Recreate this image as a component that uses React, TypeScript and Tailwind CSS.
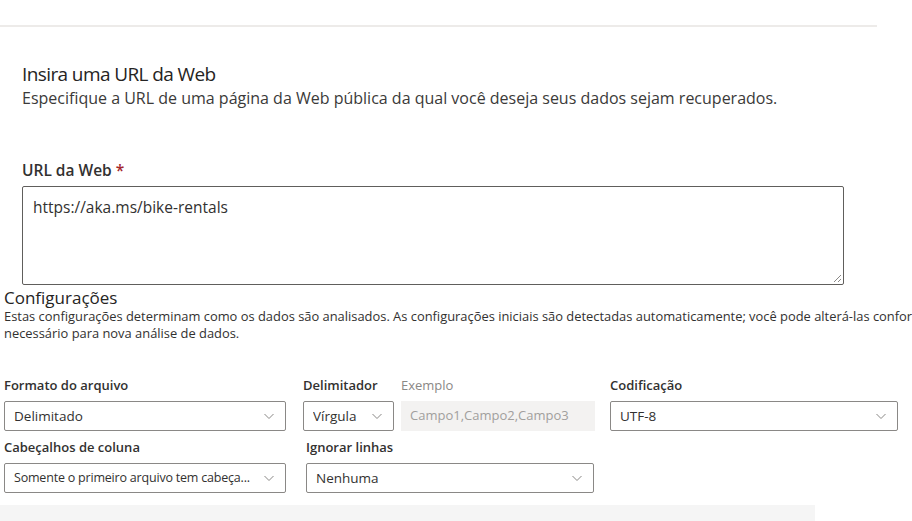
import React from "react";

const font = { fontFamily: '"Open Sans", "Noto Sans", sans-serif' };

const Chevron = () => (
  <svg width="12" height="12" viewBox="0 0 12 12" fill="none" className="shrink-0">
    <path d="M1.5 4 L6 8.5 L10.5 4" stroke="#8a8886" strokeWidth="1" />
  </svg>
);

type DropdownProps = {
  value: string;
  className?: string;
  textClass?: string;
};

const Dropdown = ({ value, className, textClass }: DropdownProps) => (
  <div
    className={`h-[30px] flex items-center justify-between border border-[#8a8886] rounded-[2px] bg-white pl-[9px] pr-[10px] text-[13.5px] text-[#323130] ${className ?? ""}`}
  >
    <span className={`whitespace-nowrap overflow-hidden ${textClass ?? ""}`}>{value}</span>
    <Chevron />
  </div>
);

const Label = ({ children, className }: { children: React.ReactNode; className?: string }) => (
  <div className={`text-[13px] font-semibold text-[#323130] h-[20px] leading-[20px] ${className ?? ""}`}>
    {children}
  </div>
);

export default function App() {
  return (
    <div className="w-[912px] h-[521px] bg-white overflow-hidden" style={font}>
      <div className="pt-[25px]">
        <div className="w-[877px] h-[2px] bg-[#edebe9]" />
      </div>

      {/* web url section */}
      <div className="pl-[22px] pt-[34px]">
        <h1 className="text-[19px] leading-[26px] tracking-[-0.6px] text-[#252423]">Insira uma URL da Web</h1>
        <p className="text-[16px] leading-[22px] text-[#3b3a39] whitespace-nowrap">
          Especifique a URL de uma página da Web pública da qual você deseja seus dados sejam recuperados.
        </p>

        <div className="pt-[51px]">
          <div className="text-[15.5px] font-semibold text-[#323130] leading-[20px]">
            URL da Web <span className="text-[#a4262c]">*</span>
          </div>
          <div className="mt-[6px] w-[822px] h-[99px] border border-[#605e5c] rounded-[2px] relative">
            <div className="px-[10px] pt-[10px] text-[15.5px] text-[#323130] leading-[20px]">
              https://aka.ms/bike-rentals
            </div>
            <svg width="9" height="9" viewBox="0 0 9 9" className="absolute right-[1px] bottom-[1px]">
              <path d="M8 1 L1 8 M8 5 L5 8" stroke="#8a8886" strokeWidth="1" />
            </svg>
          </div>
        </div>
      </div>

      {/* settings section */}
      <div className="pl-[4px] pt-[2px]">
        <h2 className="text-[17px] leading-[21px] text-[#252423]">Configurações</h2>
        <p className="text-[12.9px] leading-[17px] text-[#323130] whitespace-nowrap">
          Estas configurações determinam como os dados são analisados. As configurações iniciais são detectadas automaticamente; você pode alterá-las conforme
          <br />
          necessário para nova análise de dados.
        </p>

        <div className="mt-[33px] flex">
          <div className="w-[282px]">
            <Label>Formato do arquivo</Label>
            <Dropdown value="Delimitado" className="mt-[6px] w-[282px]" />
          </div>
          <div className="ml-[17px]">
            <Label>Delimitador</Label>
            <Dropdown value="Vírgula" className="mt-[6px] w-[91px]" />
          </div>
          <div className="ml-[7px]">
            <div className="text-[13px] text-[#8a8886] h-[20px] leading-[20px]">Exemplo</div>
            <div className="mt-[6px] w-[194px] h-[30px] bg-[#f3f2f1] flex items-center pl-[9px] text-[13px] text-[#a19f9d]">
              Campo1,Campo2,Campo3
            </div>
          </div>
          <div className="ml-[15px]">
            <Label>Codificação</Label>
            <Dropdown value="UTF-8" className="mt-[6px] w-[288px]" />
          </div>
        </div>

        <div className="mt-[6px] flex">
          <div className="w-[282px]">
            <Label>Cabeçalhos de coluna</Label>
            <Dropdown
              value="Somente o primeiro arquivo tem cabeça..."
              className="mt-[6px] w-[282px]"
              textClass="text-[12.5px] tracking-[-0.2px]"
            />
          </div>
          <div className="ml-[20px]">
            <Label>Ignorar linhas</Label>
            <Dropdown value="Nenhuma" className="mt-[6px] w-[288px]" />
          </div>
        </div>
      </div>

      <div className="mt-[12px] w-[815px] h-[20px] bg-[#f5f5f5]" />
    </div>
  );
}
